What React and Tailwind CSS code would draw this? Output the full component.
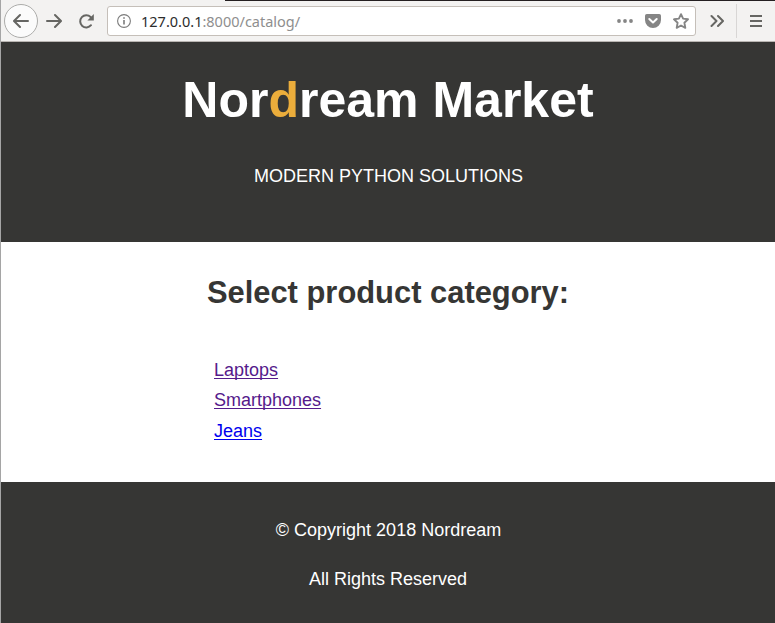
const LINKS = [
  { label: "Laptops", tone: "text-[#551a8b]" },
  { label: "Smartphones", tone: "text-[#551a8b]" },
  { label: "Jeans", tone: "text-[#0000ee]" },
];

const stroke = {
  fill: "none",
  stroke: "#666663",
  strokeWidth: 2,
  strokeLinecap: "round",
  strokeLinejoin: "round",
};

function Toolbar() {
  return (
    <div className="relative flex h-[42px] items-center border-b border-[#b9b5b2] bg-[#f3f2f1] pt-px">
      <div className="absolute top-0 right-0 left-[224px] h-px bg-[#241f21]" />
      <button className="ml-[3px] flex size-[34px] shrink-0 items-center justify-center rounded-full border border-[#acacaa] bg-[#fbfbfb]">
        <svg width="16" height="16" viewBox="0 0 16 16" {...stroke}>
          <path d="M15 8H1.5M7 2 1 8l6 6" />
        </svg>
      </button>
      <svg className="ml-[8px] shrink-0" width="16" height="16" viewBox="0 0 16 16" {...stroke}>
        <path d="M1 8h13.5M9 2l6 6-6 6" />
      </svg>
      <svg className="ml-[16px] shrink-0" width="16" height="16" viewBox="0 0 16 16" {...stroke}>
        <path d="M13 12.2A6.1 6.1 0 1 1 12.6 4" />
        <path d="M15.8 1v6.4H9.4z" fill="#666663" stroke="none" />
      </svg>
      <div className="ml-[13px] flex h-[30px] w-[589px] shrink-0 items-center rounded-[3px] border border-[#c5bfb9] bg-white">
        <svg className="ml-[9px] shrink-0" width="14" height="14" viewBox="0 0 14 14" fill="none" stroke="#7b7b7b">
          <circle cx="7" cy="7" r="6.4" strokeWidth="1.1" />
          <path d="M7 6v4.5M7 3.2v1.6" strokeWidth="1.6" />
        </svg>
        <span className="ml-[10px] flex-1 text-[14.5px] leading-5 whitespace-nowrap text-[#8e8e8e] [font-family:'Noto_Sans',sans-serif]">
          <span className="text-[#2c2c2c]">127.0.0.1</span>:8000/catalog/
        </span>
        <svg className="shrink-0" width="16" height="16" viewBox="0 0 16 16" fill="#858585">
          <circle cx="2" cy="8" r="1.9" />
          <circle cx="8" cy="8" r="1.9" />
          <circle cx="14" cy="8" r="1.9" />
        </svg>
        <svg className="ml-[12px] shrink-0" width="16" height="16" viewBox="0 0 16 16">
          <path d="M1.8 1h12.4A1.8 1.8 0 0 1 16 2.8V7A8 8 0 0 1 0 7V2.8A1.8 1.8 0 0 1 1.8 1z" fill="#858585" />
          <path d="M4.3 6 8 9.5 11.7 6" fill="none" stroke="#fff" strokeWidth="2" strokeLinecap="round" strokeLinejoin="round" />
        </svg>
        <svg className="mr-[6px] ml-[12px] shrink-0" width="16" height="16" viewBox="0 0 16 16" fill="none" stroke="#858585" strokeWidth="1.9" strokeLinejoin="round">
          <path d="m8 1.2 2.1 4.4 4.9.7-3.6 3.4.9 5.1L8 12.5l-4.3 2.3.9-5.1L1 6.3l4.9-.7z" />
        </svg>
      </div>
      <svg className="ml-[14px] shrink-0" width="14" height="14" viewBox="0 0 14 14" {...stroke}>
        <path d="m1.5 2 5 5-5 5M8 2l5 5-5 5" />
      </svg>
      <div className="ml-[12px] h-[34px] w-px shrink-0 bg-[#d8d6d5]" />
      <svg className="ml-[13px] shrink-0" width="12" height="12" viewBox="0 0 12 12" {...stroke} strokeLinecap="butt">
        <path d="M0 1h12M0 6h12M0 11h12" />
      </svg>
    </div>
  );
}

export default function App() {
  return (
    <div className="flex h-[623px] w-[775px] flex-col overflow-hidden border-l border-[#a5a5a5] bg-white text-[18px] [font-family:'Liberation_Sans',Arial,sans-serif]">
      <Toolbar />
      <header className="h-[200px] shrink-0 bg-[#363634] text-center text-white">
        <h1 className="pt-[28px] text-[50px] leading-[60px] font-bold">
          Nor<span className="text-[#ebad3b]">d</span>ream Market
        </h1>
        <p className="mt-[35px] pl-px leading-[22px]">MODERN PYTHON SOLUTIONS</p>
      </header>
      <main className="h-[240px] shrink-0">
        <h2 className="pt-[33px] text-center text-[30.9px] leading-[36px] font-bold text-[#363634]">
          Select product category:
        </h2>
        <ul className="mt-[43.8px] ml-[213px]">
          {LINKS.map((link) => (
            <li key={link.label} className="h-[30.6px] leading-[30.6px]">
              <a className={`${link.tone} underline decoration-1 underline-offset-2 [text-decoration-skip-ink:none]`} href="#">{link.label}</a>
            </li>
          ))}
        </ul>
      </main>
      <footer className="flex-1 bg-[#363634] pt-[37px] text-center text-white">
        <p className="pl-px leading-[22px]">© Copyright 2018 Nordream</p>
        <p className="mt-[27px] leading-[22px]">All Rights Reserved</p>
      </footer>
    </div>
  );
}
